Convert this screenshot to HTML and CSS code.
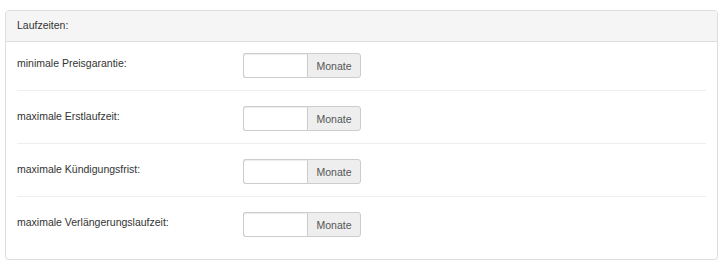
FILE: index.html
```html
<!DOCTYPE html>
<html lang="de">
<head>
<meta charset="utf-8">
<link rel="stylesheet" href="styles.css">
</head>
<body>
<div class="panel">
  <div class="panel-heading">Laufzeiten:</div>
  <div class="panel-body">
    <div class="row">
      <label class="label">minimale Preisgarantie:</label>
      <div class="input-group"><input class="field" type="text"><span class="addon">Monate</span></div>
    </div>
    <div class="row">
      <label class="label">maximale Erstlaufzeit:</label>
      <div class="input-group"><input class="field" type="text"><span class="addon">Monate</span></div>
    </div>
    <div class="row">
      <label class="label">maximale Kündigungsfrist:</label>
      <div class="input-group"><input class="field" type="text"><span class="addon">Monate</span></div>
    </div>
    <div class="row last">
      <label class="label">maximale Verlängerungslaufzeit:</label>
      <div class="input-group"><input class="field" type="text"><span class="addon">Monate</span></div>
    </div>
  </div>
</div>
</body>
</html>
```
FILE: styles.css
```css
html, body { background: #fff; }
body {
  margin: 10px 7px 0 5px;
  font-family: "Liberation Sans", Arial, sans-serif;
  font-size: 10.5px;
  color: #333;
}
.panel {
  border: 1px solid #ddd;
  border-radius: 4px;
  box-shadow: 0 1px 1px rgba(0,0,0,0.05);
}
.panel-heading {
  background: #f5f5f5;
  border-bottom: 1px solid #ddd;
  border-radius: 3px 3px 0 0;
  height: 30px;
  line-height: 28px;
  padding: 0 11px 2px;
  box-sizing: border-box;
  height: 31px;
}
.panel-body {
  padding: 11px 11px 22px;
}
.row {
  display: flex;
  align-items: flex-start;
  padding: 0 0 12px;
  margin-bottom: 15px;
  border-bottom: 1px solid #eee;
}
.row.last {
  margin-bottom: 0;
  border-bottom: none;
  padding-bottom: 0;
}
.label {
  width: 226px;
  flex: none;
  padding-top: 2px;
  line-height: 16px;
}
.input-group {
  display: flex;
  height: 25px;
}
.field {
  width: 64px;
  height: 25px;
  box-sizing: border-box;
  border: 1px solid #ccc;
  border-right: none;
  border-radius: 3px 0 0 3px;
  margin: 0;
  padding: 0 6px;
  box-shadow: inset 0 1px 1px rgba(0,0,0,0.075);
  font: inherit;
}
.addon {
  width: 54px;
  height: 25px;
  box-sizing: border-box;
  border: 1px solid #ccc;
  border-radius: 0 3px 3px 0;
  background: #eee;
  color: #555;
  display: flex;
  align-items: center;
  justify-content: center;
}
```
